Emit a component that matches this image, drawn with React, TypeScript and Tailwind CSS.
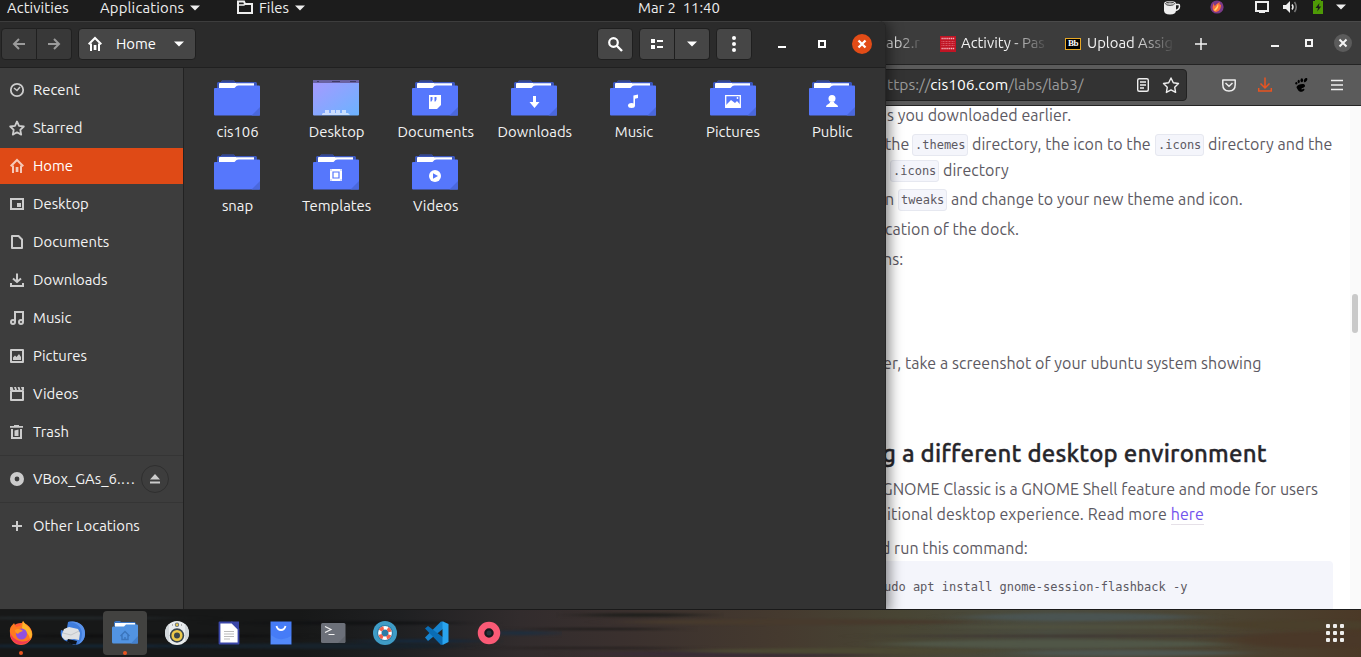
import type { ReactNode } from "react";

const ui = "font-['Ubuntu','Noto_Sans',sans-serif]";

function Ico({ children, className = "" }: { children: ReactNode; className?: string }) {
  return (
    <svg width="16" height="16" viewBox="0 0 16 16" className={`shrink-0 ${className}`} fill="none" stroke="currentColor" strokeWidth="2">
      {children}
    </svg>
  );
}

const Caret = ({ className = "" }: { className?: string }) => (
  <svg width="10" height="6" viewBox="0 0 10 6" className={`shrink-0 ${className}`}>
    <path d="M0 .5h10L5 5.500z" fill="currentColor" />
  </svg>
);

const HomeIcon = () => (
  <Ico>
    <path d="M1.700 8.300 8 2l6.300 6.300" />
    <path d="M4 7.500V14M12 7.500V14M3 14h2M11 14h2" />
    <path d="M6.700 9h2.700v5H6.700z" fill="currentColor" stroke="none" />
  </Ico>
);

/* ---------- top bar ---------- */

function TopBar() {
  return (
    <header className="flex h-[21px] shrink-0 items-start bg-[#1c1c1c] text-[14.850px] leading-[16px] text-[#eeeeee]">
      <span className="w-[93px] pl-[7px] tracking-[0.080px]">Activities</span>
      <span className="flex w-[144px] items-start pl-[7px]">
        <span className="w-[90px] tracking-[0.180px]">Applications</span>
        <Caret className="mt-[5px]" />
      </span>
      <span className="flex w-[401px] items-start">
        <svg width="16" height="14" viewBox="0 0 16 14" className="mr-[6px]" fill="none" stroke="currentColor" strokeWidth="2">
          <path d="M1 13V1.500h6l1 2.500h7v9z" />
          <path d="M1 5h6l1.500-2" strokeWidth="1.500" />
        </svg>
        <span className="w-[36px]">Files</span>
        <Caret className="mt-[5px]" />
      </span>
      <span className="w-[524px] whitespace-pre">Mar 2  11:40</span>
      <svg width="199" height="17" viewBox="1162 0 199 17" fill="none">
        <path d="M1164 3.500q0-2.500 6-2.500t6 2.500v7q0 4-6 4t-6-4z" fill="#eee" />
        <ellipse cx="1170" cy="3.700" rx="4.500" ry="1.600" stroke="#333" />
        <path d="M1166 4q4-2 8 .5" stroke="#999" strokeWidth=".8" />
        <path d="M1176 4.500h2.500q1 0 1 1.500c0 2.500-1.500 4-4 4.500" stroke="#eee" strokeWidth="1.500" />
        <circle cx="1217" cy="7" r="6.600" fill="#7b3a88" />
        <path d="M1213 10c-1-3 0-5 1-7 0 2 0 2 1 3 1-2 3-3 5-4-1 2-.5 2 1 3 0 3-1 6-5 7-1 0-2-1-3-2z" fill="#ff7139" />
        <path d="M1214 10c1-2 3-3 4-6 1 2 0 5-3 7z" fill="#ffd567" />
        <path d="M1256 2h12v9h-12z" stroke="#eee" strokeWidth="2" />
        <path d="M1259 11h6v2h-6z" fill="#eee" />
        <path d="M1283 5h3l4-4v12l-4-4h-3z" fill="#eee" />
        <path d="M1292 4.500q2 2.500 0 5" stroke="#eee" strokeWidth="1.500" />
        <path d="M1294.500 2q3.500 5 0 10" stroke="#777" strokeWidth="1.500" />
        <path d="M1313 1h10v13h-10zM1315 0h6v1h-6z" fill="#4e9a06" />
        <path d="M1319.500 3l-4 5h2.500l-.8 3.500 4-5h-2.400z" fill="#1c1c1c" />
        <path d="M1336 4.500h10l-5 5z" fill="#eee" />
      </svg>
    </header>
  );
}

/* ---------- browser ---------- */

const Code = ({ children, className = "" }: { children: ReactNode; className?: string }) => (
  <code className={`mt-[2px] flex h-[22px] shrink-0 items-center rounded-[3px] border border-[#e6e8f0] bg-[#f4f5fb] pl-[2px] font-['DejaVu_Sans_Mono',monospace] text-[12px] tracking-normal text-[#5c5962] ${className}`}>
    {children}
  </code>
);

const Line = ({ children, className = "" }: { children: ReactNode; className?: string }) => (
  <div className={`flex h-[26px] shrink-0 items-center whitespace-pre ${className}`}>{children}</div>
);

function Browser() {
  return (
    <section className="ml-[880px] flex h-[588px] w-[481px] flex-col overflow-hidden bg-white">
      <div className="flex h-[43px] shrink-0 items-center border-t border-[#4a4a4a] bg-[#3c3c3c] pt-[1px] text-[14.850px] text-[#f2f2f2]">
        <span className="ml-[6px] w-[34px] shrink-0 whitespace-nowrap [mask-image:linear-gradient(90deg,#0008,#000_20%,#0002_98%)]">ab2.r</span>
        <svg width="16" height="16" viewBox="0 0 16 16" className="ml-[20px] shrink-0">
          <path d="M0 0h16v16H0z" fill="#c01424" />
          <path d="M1.500 2.500h13M1.500 12.500h13" stroke="#f3b5bd" strokeWidth="1.500" strokeDasharray="1.300 .6" />
          <path d="M1.500 5.500h13M1.500 7.500h13M1.500 9.500h13" stroke="#e3707f" strokeWidth=".7" strokeDasharray="1 .5" />
        </svg>
        <span className="ml-[5px] w-[90px] shrink-0 whitespace-nowrap [mask-image:linear-gradient(90deg,#000_52%,#0000_98%)]">Activity - Pas</span>
        <span className="ml-[14px] flex h-[12px] w-[16px] shrink-0 items-center justify-center border border-[#e8a825] bg-black font-['Liberation_Serif',serif] text-[9px] font-bold tracking-[-0.500px] text-white">Bb</span>
        <span className="ml-[6px] w-[90px] shrink-0 whitespace-nowrap [mask-image:linear-gradient(90deg,#000_52%,#0000_98%)]">Upload Assig</span>
        <svg width="184" height="24" viewBox="1177 32 184 24" className="shrink-0" fill="none" stroke="#f4f4f4">
          <path d="M1195 44h12M1201 38v12" strokeWidth="1.500" />
          <path d="M1271 46h8" strokeWidth="2" />
          <path d="M1306 40h6v6h-6z" strokeWidth="2" />
          <circle cx="1343" cy="43" r="9" fill="#5b5b5b" stroke="none" />
          <path d="M1339.500 39.500l7 7M1346.500 39.500l-7 7" strokeWidth="2" />
        </svg>
      </div>
      <div className="flex h-[42px] shrink-0 items-center border-y border-[#242424] bg-[#5b5b5b] pb-[1px]">
        <div className="flex h-[32px] w-[307px] shrink-0 items-center rounded-r-[4px] border border-[#222] bg-[#333333] pl-[6px] text-[15.600px] text-[#9b9b9b]">
          <span className="w-[249px] whitespace-nowrap">ttps://<span className="text-white">cis106.com</span>/labs/lab3/</span>
          <svg width="44" height="18" viewBox="1136 76 44 18" fill="none" stroke="#eee" strokeWidth="1.400">
            <rect x="1137.700" y="78.700" width="10.600" height="12.600" rx="1.500" />
            <path d="M1140 82h6M1140 85h6M1140 88h4" />
            <path d="M1171 78l2.300 4.800 5.200.7-3.800 3.700.9 5.200-4.600-2.500-4.600 2.500.9-5.200-3.800-3.700 5.200-.7z" strokeLinejoin="round" />
          </svg>
        </div>
        <svg width="174" height="24" viewBox="1187 73 174 24" fill="none" strokeWidth="1.500">
          <path d="M1222.800 80h12.400v4.500c0 4-2.500 6.500-6.200 6.500s-6.200-2.500-6.200-6.500z" stroke="#eee" strokeLinejoin="round" />
          <path d="M1225.500 83l3.500 3.300 3.500-3.300" stroke="#eee" />
          <path d="M1265 77.500v10.500M1260.500 83.500l4.500 4.500 4.500-4.500M1258.700 88v3h12.600v-3" stroke="#e95420" />
          <path d="M1306.500 78c-2 0-3 2-2.500 4 1 1 3-1 3.300-2.500.2-1-.2-1.500-.8-1.500z" fill="#000" />
          <ellipse cx="1301.800" cy="80.300" rx="1.300" ry="2" fill="#000" />
          <ellipse cx="1298.700" cy="81.500" rx="1.100" ry="1.700" fill="#000" />
          <ellipse cx="1296.300" cy="83.300" rx="1" ry="1.300" fill="#000" />
          <path d="M1296.500 87c1-3 9-4.500 8.500-1-.3 2-3.500 1.500-3.500 3 0 1 1 .5 1.700-.2 1-.5 1.800.5.800 1.700-2 2-5 1.500-6-.5-.5-1-1.500-2-1.500-3z" fill="#000" />
          <path d="M1331 80.500h12M1331 85h12M1331 89.500h12" stroke="#eee" />
        </svg>
      </div>
      <div className="flex min-h-0 flex-1 overflow-hidden">
        <article className="-mt-[4px] flex w-[470px] flex-col text-[16px] tracking-[0.045px] text-[#5c5962]">
          <Line className="pl-[7px]">s you downloaded earlier.</Line>
          <Line className="mt-[3px] pl-[5px]">
            <span className="w-[27px]">the</span>
            <Code className="w-[56px]">.themes</Code>
            <span className="ml-[4px] w-[183px]">directory, the icon to the</span>
            <Code className="w-[49px]">.icons</Code>
            <span className="ml-[4px]">directory and the</span>
          </Line>
          <Line className="pl-[10px]">
            <Code className="w-[49px]">.icons</Code>
            <span className="ml-[4px]">directory</span>
          </Line>
          <Line className="mt-[3px] pl-[5px]">
            <span className="w-[13px]">n</span>
            <Code className="w-[49px]">tweaks</Code>
            <span className="ml-[4px]">and change to your new theme and icon.</span>
          </Line>
          <Line className="mt-[4px] pl-[5px]">cation of the dock.</Line>
          <Line className="mt-[4px] pl-[3px]">ns:</Line>
          <Line className="mt-[78px] pl-[3px]">er, take a screenshot of your ubuntu system showing</Line>
          <h2 className="mt-[62px] flex h-[32px] shrink-0 items-center whitespace-pre pl-[2px] text-[24px] font-medium tracking-[0.200px] text-[#27262b] [-webkit-text-stroke:0.350px_#27262b]">g a different desktop environment</h2>
          <Line className="mt-[6px] pl-[2px]">GNOME Classic is a GNOME Shell feature and mode for users</Line>
          <Line className="-mt-px pl-[7px] tracking-[0.120px]">
            itional desktop experience. Read more <a className="mt-px border-b border-[#e6e1e8] leading-[19px] text-[#7253ed]">here</a>
          </Line>
          <Line className="mt-[8px] pl-px">d run this command:</Line>
          <pre className="flex h-[60px] w-[453px] shrink-0 items-start rounded-[4px] bg-[#f4f5fb] pl-[4px] pt-[17px] font-['DejaVu_Sans_Mono',monospace] text-[12px] leading-[18px] tracking-normal">udo apt install gnome-session-flashback -y</pre>
        </article>
        <div className="w-[11px] bg-[#fafafa] pl-[2px] pt-[188px]">
          <div className="h-[39px] w-[6px] rounded-full bg-[#c9c9c9]" />
        </div>
      </div>
    </section>
  );
}

/* ---------- file manager ---------- */

const btn = "flex h-[32px] shrink-0 items-center justify-center border border-[#1f1f1f] bg-[#464646] text-white";

const places: [string, ReactNode][] = [
  ["Recent", <Ico key="r"><circle cx="8" cy="8" r="6.200" strokeWidth="1.800" /><path d="M5 6l3 2.500L11 5" strokeWidth="1.500" /></Ico>],
  ["Starred", <Ico key="s"><path d="M8 1.500l2 4.300 4.800.7-3.500 3.400.9 4.700L8 12.300l-4.200 2.300.9-4.700L1.200 6.500 6 5.800z" strokeWidth="1.800" strokeLinejoin="round" /></Ico>],
  ["Home", <HomeIcon key="h" />],
  ["Desktop", <Ico key="d"><path d="M2 3h12v10H2z" /><path d="M8 7h4v4H8z" fill="currentColor" stroke="none" /></Ico>],
  ["Documents", <Ico key="o"><path d="M3 2h6.500L13 5.500V14H3z" strokeLinejoin="round" /></Ico>],
  ["Downloads", <Ico key="w"><path d="M8 1.500v8M4 6.500L8 10l4-3.500M2 11v3h12v-3" /></Ico>],
  ["Music", <Ico key="m"><path d="M6 12V2h8v10" /><circle cx="4" cy="12" r="2" /><circle cx="12" cy="12" r="2" /></Ico>],
  ["Pictures", <Ico key="p"><path d="M2 2h12v12H2z" strokeLinejoin="round" /><path d="M4 12V9.500l2-2 1.500 1.500L10 6l2 3v3z" fill="currentColor" stroke="none" /></Ico>],
  ["Videos", <Ico key="v"><path d="M2 5h12v9H2z" strokeLinejoin="round" /><path d="M1 1h2.500l1 3H1zM5 1h2l1 3H6zM8.500 1h2l1 3h-2zM12 1h3v3h-2z" fill="currentColor" stroke="none" /></Ico>],
  ["Trash", <Ico key="t"><path d="M1 2h13v1.800H1zM5 1h5v1H5z" fill="currentColor" stroke="none" /><path d="M3 5v9h9V5" /><path d="M5.500 6.500l4-1v6.500h-4z" fill="currentColor" stroke="none" /></Ico>],
];

const glyphs: Record<string, ReactNode> = {
  Documents: <><path d="M17 15h12v10l-4 4h-8z" fill="#fff" /><path d="M18.500 17h2v2.500l-1 2h-1zM22.500 17h2v2.500l-1 2h-1z" fill="#5677fc" /></>,
  Downloads: <path d="M22 16h3v6h3.500l-5 6-5-6H22z" fill="#fff" />,
  Music: <><ellipse cx="21.500" cy="25.500" rx="3.500" ry="2.500" fill="#fff" /><path d="M23.400 25.500V15.500l4.600-1v3.500l-3 .8v6.700z" fill="#fff" /></>,
  Pictures: <><path d="M15.700 15.700h14.600v11.600H15.700z" fill="none" stroke="#fff" strokeWidth="1.300" /><path d="M16 27v-2l5-5 4 3 2-2 3.500 4v2z" fill="#fff" /><circle cx="27.500" cy="18" r=".9" fill="#fff" /></>,
  Public: <><circle cx="23" cy="18.500" r="3.500" fill="#fff" /><path d="M17 27c0-3 4-3 4-5h4c0 2 4 2 4 5z" fill="#fff" /></>,
  Templates: <><path d="M17 15h12v12H17z" fill="#fff" /><path d="M20 18h6v6h-6z" fill="none" stroke="#5677fc" strokeWidth="1.200" /><path d="M17.500 15.500h1v1h-1zM27.500 15.500h1v1h-1zM17.500 25.500h1v1h-1zM27.500 25.500h1v1h-1z" fill="#5677fc" /></>,
  Videos: <><circle cx="23" cy="22" r="6" fill="#fff" /><path d="M21 19.200l5 2.800-5 2.800z" fill="#5677fc" /></>,
};

function Folder({ name }: { name: string }) {
  if (name === "Desktop")
    return (
      <svg width="46" height="36" viewBox="0 0 46 36">
        <defs>
          <linearGradient id="desk" x1="0" y1="0" x2="1" y2="1">
            <stop offset="0" stopColor="#a799ff" />
            <stop offset="1" stopColor="#6bb3ff" />
          </linearGradient>
        </defs>
        <rect width="46" height="35.500" rx="1" fill="url(#desk)" />
        <path d="M0 0h46v3H0z" fill="#6a62a3" />
        <path d="M4 1.500h2M19 1.500h8M37 1.500h6" stroke="#403b66" />
        <path d="M9 35v-1l1-1h2v-3h4v3h2v-3h4v3h1v-3h4v3h2v-3h4v3h2l2 2z" fill="#fff" opacity=".6" />
      </svg>
    );
  return (
    <svg width="46" height="36" viewBox="0 0 46 36">
      <path d="M3 9V3l1-1h3l1-1.500h12L21 2h21l1 1v8H3z" fill="#3c57bd" />
      <path d="M8 1.500h12" stroke="#34478f" />
      <path d="M5 9V4q0-1 1-1h34v5H5z" fill="#fff" />
      <path d="M22 3.500h18" stroke="#c9d2f3" />
      <path d="M0 9q0-1 1-1h19.500l2-2q.7-.6 2-.6H45q1 0 1 1V34.500q0 1-1 1H1q-1 0-1-1z" fill="#5677fc" />
      <path d="M46 27v8.500h-8.500z" fill="#4a68dd" />
      {glyphs[name]}
    </svg>
  );
}

function Files() {
  const folders = ["cis106", "Desktop", "Documents", "Downloads", "Music", "Pictures", "Public", "snap", "Templates", "Videos"];
  return (
    <section className="absolute left-0 top-0 flex h-[588px] w-[886px] flex-col overflow-hidden rounded-tr-[7px] border-r border-[#262626] bg-[#333333] text-[14.850px] text-[#f4f4f4] shadow-[0_2px_14px_3px_rgba(0,0,0,0.5)]">
      <div className="flex h-[47px] shrink-0 items-center border-b border-t border-b-[#202020] border-t-[#3d3d3d] bg-[#2b2b2b] pb-px pl-px">
        <button className="flex h-[32px] w-[36px] shrink-0 items-center justify-center rounded-l-[4px] border border-[#202020] bg-[#383838] text-[#9b9b9b]">
          <Ico><path d="M14 8H3M8 3L3 8l5 5" /></Ico>
        </button>
        <button className="flex h-[32px] w-[35px] shrink-0 items-center justify-center rounded-r-[4px] border border-l-0 border-[#202020] bg-[#383838] text-[#9b9b9b]">
          <Ico><path d="M2 8h11M8 3l5 5-5 5" /></Ico>
        </button>
        <button className={`${btn} ml-[6px] w-[118px] rounded-[4px] pr-[3px]`}>
          <HomeIcon />
          <span className="ml-[13px] w-[43px] text-left">Home</span>
          <Caret className="ml-[15px]" />
        </button>
        <button className={`${btn} ml-[401px] w-[36px] rounded-[4px] pr-px`}>
          <Ico><circle cx="6.500" cy="6.500" r="4.300" strokeWidth="2.200" /><path d="M9.500 9.500L15 15" strokeWidth="2.400" /></Ico>
        </button>
        <button className={`${btn} ml-[6px] w-[36px] rounded-l-[4px] pr-px`}>
          <Ico><path d="M2 3h4v4H2zM2 9h4v4H2z" fill="currentColor" stroke="none" /><path d="M8 5h6M8 11h6" /></Ico>
        </button>
        <button className={`${btn} w-[35px] rounded-r-[4px] border-l-0 pr-px`}>
          <Caret />
        </button>
        <button className={`${btn} ml-[6px] w-[36px] rounded-[4px] pr-px`}>
          <Ico><circle cx="8" cy="2" r="2" fill="currentColor" stroke="none" /><circle cx="8" cy="8" r="2" fill="currentColor" stroke="none" /><circle cx="8" cy="14" r="2" fill="currentColor" stroke="none" /></Ico>
        </button>
        <svg width="133" height="24" viewBox="752 32 133 24" className="shrink-0" fill="none" stroke="#fff" strokeWidth="2">
          <path d="M778 47h8M819 41h6v6h-6z" />
          <circle cx="862" cy="44" r="10" fill="#e24c17" stroke="none" />
          <path d="M858.500 40.500l7 7M865.500 40.500l-7 7" strokeWidth="2.300" />
        </svg>
      </div>
      <div className="flex min-h-0 flex-1">
        <nav className="flex w-[184px] shrink-0 flex-col border-r border-[#222] bg-[#3d3d3d] pt-[4px]">
          <div className="flex flex-col gap-[2px]">
            {places.map(([name, icon]) => (
              <div key={name} className={`flex h-[36px] items-center gap-[8px] pl-[9px] ${name === "Home" ? "bg-[#df4a16] text-[#fff]" : ""}`}>
                <span className={name === "Home" ? "text-[#f6c9b8]" : "text-[#cccccc]"}>{icon}</span>
                <span>{name}</span>
              </div>
            ))}
          </div>
          <div className="mt-[5px] flex h-[48px] shrink-0 items-center border-y border-[#353535] pl-[9px]">
            <Ico className="text-[#cccccc]"><circle cx="8" cy="8" r="4.700" strokeWidth="4.600" /><circle cx="8" cy="8" r="1" fill="#3d3d3d" stroke="none" /></Ico>
            <span className="ml-[8px] w-[108px] whitespace-nowrap">VBox_GAs_6.…</span>
            <span className="flex size-[28px] shrink-0 items-center justify-center rounded-full border border-[#2f2f2f] text-[#cccccc]">
              <svg width="10" height="10" viewBox="0 0 10 10" fill="currentColor"><path d="M5 0l5 5.500H0zM0 7.500h10V9.500H0z" /></svg>
            </span>
          </div>
          <div className="mt-[5px] flex h-[36px] items-center gap-[8px] pl-[9px]">
            <Ico className="text-[#cccccc]"><path d="M8 3v10M3 8h10" /></Ico>
            <span>Other Locations</span>
          </div>
        </nav>
        <div className="grid h-[148px] grid-cols-[repeat(7,99.100px)] grid-rows-[74px_74px] pl-[3.500px] pt-[12px]">
          {folders.map((name) => (
            <div key={name} className="flex flex-col items-center">
              <Folder name={name} />
              <span className="ml-px mt-[6px] leading-[20px]">{name}</span>
            </div>
          ))}
        </div>
      </div>
    </section>
  );
}

/* ---------- dock ---------- */

const streaks: [number, number, number, number, string][] = [
  [60, 8, 120, 1.5, "#222729"], [90, 36, 170, 1.8, "#152431"], [150, 26, 140, 1.5, "#0f0f10"],
  [350, 13, 110, 1.5, "#101113"], [330, 36, 130, 3, "#17222b"], [420, 31, 60, 2, "#16283a"], [520, 23, 30, 2.5, "#1c2e40"],
  [640, 5, 60, 2, "#1f1f1c"], [600, 19, 70, 1, "#1e1c1b"], [590, 38, 90, 1, "#262120"],
  [730, 44, 140, 3, "#3a2d36"], [800, 12, 170, 3, "#473a2d"], [850, 41, 160, 3, "#4b4833"],
  [1080, 7, 110, 4, "#4a5452"], [1100, 17, 150, 2, "#4f503f"], [1080, 26, 200, 1.2, "#3f3833"],
  [1060, 34, 170, 4, "#505647"], [1130, 43, 110, 3, "#4d5650"], [1300, 15, 90, 5, "#4a3f2b"], [1320, 30, 90, 8, "#4a3828"],
];

const apps: ReactNode[] = [
  <>
    <circle cx="13" cy="14" r="11" fill="#ff5a36" />
    <path d="M2 13C1 6 5 5 6 3l2 4 4-1 3-5c2 4 7 4 9 11 2 7-4 12-11 12C6 24 3 19 2 13z" fill="#ff7a1f" />
    <path d="M15 1c2 4 8 6 9 13 0 2-1 4-2 5-1-7-6-7-8-11z" fill="#ffb52b" />
    <path d="M2 12c0 8 6 13 12 12 4 0 8-3 9-6-3 4-8 4-11 3-5-1-9-5-10-9z" fill="#f23a55" />
    <circle cx="13.500" cy="14" r="5.500" fill="#9150e0" />
    <path d="M7 10c3-2 6-1 8 1-2 1-4 1-5 3-2-1-3-2-3-4z" fill="#ff9a21" />
  </>,
  <>
    <path d="M8 2c8-2 17 3 17 12 0 5-3 9-7 10.500L14 25 4 20C1 17 0 14 1 10l3 1 3-3z" fill="#3f7ddd" />
    <path d="M9 2c6 0 13 4 13 12 0 5-2 8-4 10 5-2 7-6 7-11C25 4 16 0 9 2z" fill="#5a93ec" />
    <path d="M2 14l2-5 5-2 9 2 2 4-1 7-5-1-9 1-3-3z" fill="#dfe1e3" />
    <path d="M3 13l8 2 8-4" stroke="#c3c6c9" fill="none" />
    <path d="M8 19l9 2-1 3.500q-5 .5-9-3z" fill="#0d1117" />
  </>,
  <>
    <path d="M2 6V2l2-1h4l1 1h14l1 2v5z" fill="#3c76c2" />
    <path d="M3 3h20v4H3z" fill="#fff" />
    <path d="M0 8q0-1.500 1-1.500h11l2-2h11q1 0 1 1V22q0 1.500-1.500 1.500h-23Q0 23.500 0 22z" fill="#5294e2" />
    <path d="M8.500 16l4.500-4.500 4.500 4.500M10 15v4.500h6V15M13 17v2.500" stroke="#3b75bb" strokeWidth="1.400" fill="none" />
    <path d="M26 16v7.500h-7z" fill="#4480cc" />
  </>,
  <>
    <circle cx="13" cy="13" r="12" fill="#e9ecee" />
    <path d="M1 13a12 12 0 0 1 4-9v18a12 12 0 0 1-4-9zM25 13a12 12 0 0 0-4-9v18a12 12 0 0 0 4-9z" fill="#d3d8db" />
    <circle cx="13" cy="15.500" r="7.200" fill="#39454d" />
    <circle cx="13" cy="15.500" r="4.300" fill="none" stroke="#ecc94b" strokeWidth="2.600" />
    <circle cx="13" cy="4.700" r="2.200" fill="#6c767c" />
    <circle cx="13" cy="4.700" r="1.200" fill="#ecc94b" />
    <path d="M8 5h1M17 5h1" stroke="#777" />
  </>,
  <>
    <path d="M3.500 2.500h12.500l6.500 6.500v14.500h-19z" fill="#fff" stroke="#3a46a8" strokeWidth="1.800" strokeLinejoin="round" />
    <path d="M15 1.500h8v8z" fill="#3a46a8" />
    <path d="M8 11.500h10M8 14h10M8 16.500h10M8 19h6" stroke="#bbb" />
  </>,
  <>
    <path d="M2.500 1.500h21v23h-21z" fill="#467cf7" />
    <path d="M3 15q10 8 20 1v8H3z" fill="#558cfa" opacity=".8" />
    <path d="M8.500 6q1 4 4.500 4t4.500-4" stroke="#fff" strokeWidth="1.800" fill="none" />
  </>,
  <>
    <rect x="1" y="3" width="24.500" height="20" rx="1.500" fill="#6c7079" />
    <path d="M25 16v7h-7z" fill="#61656d" />
    <path d="M5 6.500l6 3-6 3M8.500 14.500h6" stroke="#f2f2f2" strokeWidth="1.200" fill="none" />
  </>,
  <>
    <circle cx="13" cy="13" r="12" fill="#3f9cc6" />
    <circle cx="13" cy="13" r="8" fill="#2c7ca6" />
    <circle cx="13" cy="13" r="5.200" fill="none" stroke="#fff" strokeWidth="3.400" />
    <circle cx="13" cy="13" r="5.200" fill="none" stroke="#f0624d" strokeWidth="3.400" strokeDasharray="4.084 4.084" strokeDashoffset="-2.040" />
  </>,
  <>
    <path d="M1 17.500L17 1.500l3 .5v6L4 21z" fill="#1684cf" />
    <path d="M1 8.500L4 6l16 12v6l-3 1z" fill="#0a6db5" />
    <path d="M18.500 1.200L24.500 4v18l-6 3z" fill="#29a4ef" />
  </>,
  <>
    <circle cx="13" cy="13" r="8" fill="#16181d" stroke="#fa5a76" strokeWidth="6.500" />
    <circle cx="13" cy="13" r="2.500" fill="#24343c" />
  </>,
];

function Dock() {
  return (
    <footer className="relative flex h-[48px] shrink-0 items-start overflow-hidden border-t border-[#1a1a1a] bg-[linear-gradient(90deg,#171818_0px,#171818_300px,#1f2022_400px,#322c2d_520px,#3a302e_620px,#453a2f_780px,#484534_900px,#4a4c40_1050px,#4b4433_1220px,#4b3927_1361px)]">
      <svg width="1361" height="48" className="absolute left-0 top-0">
        <defs>
          <filter id="soft" x="-20%" y="-200%" width="140%" height="500%" colorInterpolationFilters="sRGB">
            <feGaussianBlur stdDeviation="20 1.300" />
          </filter>
        </defs>
        {streaks.map(([cx, cy, rx, ry, c], i) => (
          <ellipse key={i} cx={cx} cy={cy} rx={rx} ry={ry} fill={c} filter="url(#soft)" />
        ))}
      </svg>
      <div className="relative flex gap-[8px] pt-px">
        {apps.map((icon, i) => (
          <div key={i} className={`flex h-[44px] w-[44px] flex-col items-center rounded-[4px] pt-[9px] first:ml-[-1px] ${i === 2 ? "bg-[#424240]" : ""}`}>
            <svg width="26" height="26" viewBox="0 0 26 26" className="shrink-0">{icon}</svg>
            {(i === 0 || i === 2) && <span className="mt-[5px] size-[4px] shrink-0 rounded-full bg-[#e95420]" />}
          </div>
        ))}
      </div>
      <div className="relative ml-auto mr-[17px] mt-[14px] grid grid-cols-3 gap-[3px]">
        {Array.from({ length: 9 }, (_, i) => (
          <span key={i} className="size-[4px] rounded-[1px] bg-[#eeeeec]" />
        ))}
      </div>
    </footer>
  );
}

export default function App() {
  return (
    <main className={`flex h-[657px] w-[1361px] flex-col overflow-hidden bg-black ${ui}`}>
      <TopBar />
      <div className="relative h-[588px] shrink-0 overflow-hidden">
        <Browser />
        <Files />
      </div>
      <Dock />
    </main>
  );
}
